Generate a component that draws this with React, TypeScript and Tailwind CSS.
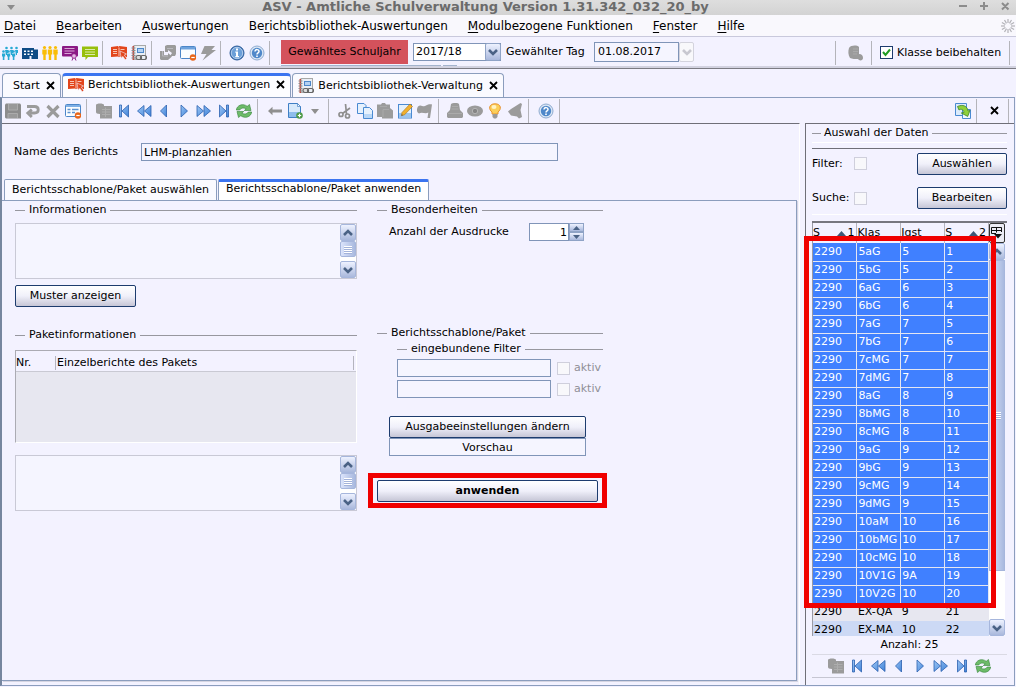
import React from "react";

type IconName =
  | "people" | "school" | "staff" | "board" | "chat" | "book" | "binder" | "export" | "form" | "bolt"
  | "info" | "help" | "db" | "save" | "undo" | "delete" | "formEdit" | "records" | "first" | "rewind"
  | "prev" | "next" | "forward" | "last" | "refresh" | "back" | "newDoc" | "caret" | "cut" | "copy"
  | "paste" | "edit" | "flag" | "print" | "eye" | "bulb" | "bell" | "swap" | "columns";

const GRAY = "#9b9b9b";
const BLUE = "#3f82d8";
const BLUE_EDGE = "#2a5fae";

const playRight = { fill: "url(#nav)", stroke: BLUE_EDGE, strokeWidth: 0.8 };

const drawings: Record<IconName, React.ReactNode> = {
  people: (
    <g fill="#27a9d4">
      {[4.5, 9.5, 14.5].map((x) => (
        <g key={x}>
          <circle cx={x} cy="3" r="1.3" />
          <path d={`M${x - 1.5} 5h3v3h-1v2h-1z`} />
          <circle cx={x - 3} cy="6.500" r="1.300" />
          <path d={`M${x - 4.5} 8.500h3.200v3h-.8v3.500h-1.600v-3.500h-.8z`} />
        </g>
      ))}
    </g>
  ),
  school: (
    <g>
      <path fill="#0f4c86" d="M0 3h12v1.500h4V14H9.500v-3h-2v3H0z" />
      <path fill="#fff" d="M2 5.500h2v1.500H2zM5.500 5.500h2v1.500h-2zM9 5.500h2v1.500H9zM2 8.500h2V10H2zM5.500 8.500h2V10h-2zM9 8.500h2V10H9z" />
    </g>
  ),
  staff: (
    <g fill="#f9bd07">
      {[2.5, 8, 13.5].map((x) => (
        <g key={x}>
          <circle cx={x} cy="2.500" r="1.600" />
          <path d={`M${x - 2.2} 4.500h4.400v5h-1v5.500h-2.400v-5.500h-1z`} />
        </g>
      ))}
    </g>
  ),
  board: (
    <g>
      <rect y="1" width="16" height="10.500" rx="1" fill="#8b1a85" />
      <path stroke="#d8a6d6" d="M2.500 3.500h10M2.500 6h10M2.500 8.500h7" />
      <circle cx="12" cy="11" r="2.300" fill="#e6b8e4" stroke="#8b1a85" strokeWidth=".8" />
      <path stroke="#8b1a85" d="M11 13l-1 2.500M13 13l1 2.500" />
    </g>
  ),
  chat: (
    <g>
      <path fill="#97bf0d" d="M0 1.500h16V12H6L3.500 15v-3H0z" />
      <path stroke="#dcebad" d="M3 4.500h10M3 7h10M3 9.500h10" />
    </g>
  ),
  book: (
    <g>
      <path fill="#e2451c" d="M0 2l7-1 .7 1 .6-1L16 2v10l-7-.5-1 .8-1-.8-7 .5z" />
      <path stroke="#f8c5b4" fill="none" d="M2 4.500h4M2 6.500h4M2 8.500h4M9.500 4.500h4M8 2.500v9" />
      <path fill="#e2451c" stroke="#f3f2ff" strokeWidth=".6" d="M9 6l6.500 3-2.200 1 2.500 3.500-1.600 1.300-2.400-3.500-1.600 2z" />
    </g>
  ),
  binder: (
    <g>
      <rect x="3" y=".5" width="11.500" height="14" fill="#e9eef5" stroke="#a8a8a8" />
      <path fill="#c3463c" d="M1.500 1H3v14H1.500z" />
      <path stroke="#8e8e8e" d="M.5 3h4M.5 5.500h4M.5 8h4M.5 10.500h4M.5 13h4" />
      <rect x="6.500" y="3.500" width="6" height="4" fill="#b4d1f2" stroke="#4d87c9" />
      <rect x="5" y="10.500" width="5.500" height="4" rx="2" fill="#ddd" stroke="#666" strokeWidth="1.200" />
      <rect x="9.500" y="10.500" width="6" height="4" rx="2" fill="none" stroke="#666" strokeWidth="1.200" />
    </g>
  ),
  export: (
    <g fill={GRAY}>
      <path d="M5 1l2-1h8l1 1v8l-1 2h-5l2-3-4-3v2H5z" />
      <path d="M0 6h4v4h4V8l4 3.500L8 15H1l-1-1z" />
      <path fill="none" stroke="#b9b9bf" d="M2.500 6v5h5.500M7 3.500h6" />
    </g>
  ),
  form: (
    <g>
      <rect x=".5" y="1.500" width="15" height="12" rx="1" fill="#fbfdff" stroke="#4c86c8" />
      <path fill="#6ea2dd" d="M1 2h14v2.500H1z" />
      <circle cx="13" cy="12.500" r="3.200" fill="#e8651a" />
      <path stroke="#fff" strokeWidth="1.200" d="M11.300 12.500h3.400" />
    </g>
  ),
  bolt: <path fill={GRAY} d="M4.500 1H15l-3.500 4H16L2.500 15.500 6.500 9H1z" />,
  info: (
    <g>
      <circle cx="8" cy="8" r="7" fill="#4a7fbf" stroke="#2f5f9c" />
      <circle cx="8" cy="8" r="5.700" fill="#6b9fd8" stroke="#c9dcf2" strokeWidth=".8" />
      <path fill="#fff" d="M7 3.500h2v2H7zM6.300 6.500H9v4.500h1v1.200H6.300V11H7V7.700h-.7z" />
    </g>
  ),
  help: (
    <g>
      <circle cx="8" cy="8" r="7" fill="#dbe7f5" stroke="#8fabd0" />
      <circle cx="8" cy="8" r="5.200" fill="#4f88ca" />
      <path fill="none" stroke="#fff" strokeWidth="1.500" d="M6 6.500c0-2.600 4-2.400 4 0C10 8 8 7.900 8 9.600" />
      <path fill="#fff" d="M7.200 10.500h1.600V12H7.200z" />
    </g>
  ),
  db: (
    <g fill={GRAY}>
      <path d="M1 3c2-3 8-3 10-1v7c3 0 4 2 4 4 0 3-4 3-5 1-3 0-6 0-8-1-2-3-2-7-1-10z" />
      <path stroke="#aaaaaa" fill="none" d="M5 4h5M5 6.500h5M5 9h4" />
    </g>
  ),
  save: (
    <g>
      <path fill="#8c8c8c" d="M0 1.500L1 .5h14l1 1v14H1L0 14.500z" />
      <path stroke="#ababab" d="M3.500 1v6h9V1M3 15V10.500h9.500V15" fill="#999" />
    </g>
  ),
  undo: <path fill="none" stroke={GRAY} strokeWidth="2.800" d="M2 3.500h7.500c5 0 5 6.500 0 6.500H5M6.800 6.500L2.800 10l4 4" />,
  delete: <path fill="none" stroke={GRAY} strokeWidth="3.200" d="M2.500 3l11 11M13.500 3l-11 11" />,
  formEdit: (
    <g>
      <rect x=".5" y="1.500" width="15" height="12" rx="1" fill="#fbfdff" stroke="#4c86c8" />
      <path fill="#7fb0e6" d="M1 2h14v2H1z" />
      <path stroke="#5d92cf" d="M2.500 6.500h3M7 6.500h6.500M2.500 9.500h3M7 9.500h3" strokeWidth="1.400" />
      <circle cx="13" cy="12.500" r="3.200" fill="#e8651a" />
      <path stroke="#fff" strokeWidth="1.200" d="M11.300 12.500h3.400" />
    </g>
  ),
  records: (
    <g>
      <path fill={GRAY} d="M0 2c0-2 8-2 8 0v1h8v12.500H4V11c-3 0-4-1-4-2z" />
      <path stroke="#adadad" fill="none" d="M6 6.500h8.500M6 9h8.500M6 11.500h8.500M9.500 4.500v9.500" />
    </g>
  ),
  first: (
    <g {...playRight}>
      <path d="M3.500 2h2v12h-2zM12.500 2v12L6 8z" />
    </g>
  ),
  rewind: <path {...playRight} d="M8 2.500v11L1.500 8zM15 2.500v11L8.500 8z" />,
  prev: <path {...playRight} d="M10.500 2v12L4.500 8z" />,
  next: <path {...playRight} d="M5 2v12l6.500-6z" />,
  forward: <path {...playRight} d="M1 2.500v11L7.500 8zM8 2.500v11L14.500 8z" />,
  last: (
    <g {...playRight}>
      <path d="M3.500 2v12L10 8zM10.500 2h2v12h-2z" />
    </g>
  ),
  refresh: (
    <g fill="#6dbb69" stroke="#35843a" strokeWidth=".6">
      <path d="M.3 7C1 2 7 0 11.200 3.300L13.500 1.500 15 7.500H8.300l1.900-1.700C7.500 4.300 4.500 5 3.800 7z" />
      <path d="M15.700 9c-.7 5-6.700 7-10.900 3.700L2.500 14.500 1 8.500h6.700l-1.900 1.700c2.700 1.500 5.700.8 6.400-1.200z" />
    </g>
  ),
  back: <path fill="#8f8f8f" d="M5.500 3.800v2.700H15v3H5.500v2.700L1 8z" />,
  newDoc: (
    <g>
      <path fill="#d7e9fb" stroke="#3f7fc5" d="M1.500.5h9l3 3v11h-12z" />
      <path fill="#8fbdec" d="M2 9h11v5H2z" />
      <path fill="#fff" stroke="#3f7fc5" strokeWidth=".7" d="M10.500.5v3h3z" />
      <circle cx="12.500" cy="12.500" r="3.300" fill="#4f9a48" />
      <path stroke="#fff" strokeWidth="1.200" d="M10.800 12.500h3.400M12.500 10.800v3.400" />
    </g>
  ),
  caret: <path fill="#8f8f8f" d="M4 6h8l-4 5z" />,
  cut: (
    <g fill="none" stroke="#8f8f8f" strokeWidth="1.700">
      <circle cx="4" cy="11.500" r="2" />
      <circle cx="10.500" cy="13" r="2" />
      <path d="M5.500 10.500L13 5M9.500 11L8.500 1" />
    </g>
  ),
  copy: (
    <g fill="#e6f1fd" stroke="#4a8ad2">
      <path d="M.5.5H7l2 2v8H.5z" />
      <path d="M6.500 4.500h6l3 3v8h-9z" />
      <path fill="#b9d7f7" stroke="none" d="M7 11h8v4H7z" />
    </g>
  ),
  paste: (
    <g>
      <path fill={GRAY} d="M0 1.500h4L5 0h3l1 1.500h4V5l3 2.500v8H5V14H0z" />
      <path stroke="#a9a9a9" fill="none" d="M3 3.500h7M6 14V6.500h6" />
    </g>
  ),
  edit: (
    <g>
      <rect x="1.500" y="1.500" width="13" height="13.500" fill="#e4f0fc" stroke="#4a8ad2" />
      <path fill="#9cc5ef" d="M2 10h12v4.500H2z" />
      <path fill="#f1b02e" stroke="#a9701a" strokeWidth=".6" d="M5 9.500L13 1l2.500 2.500-8 8.300-3 .9z" />
      <path fill="#555" d="M4.300 12.700l.5-1.600 1.200 1.200z" />
    </g>
  ),
  flag: <path fill={GRAY} d="M1 3.500c3-3 5 1.500 8-1 2-1.500 5-1.500 6-1L13 15h-2.500l.8-5.500c-3 2-6-1-9.300 1C0 10-1 7 1 3.500z" />,
  print: (
    <g>
      <path fill={GRAY} d="M4 1c3-1.500 6-1.500 8 0l1 6 3 3v4l-1 1H1l-1-1v-4l3-3z" />
      <path stroke="#ababab" fill="none" d="M5 3.500h6M4.500 6h7M1 10.500h14" />
    </g>
  ),
  eye: (
    <g>
      <ellipse cx="8" cy="8" rx="8" ry="5.500" fill={GRAY} />
      <circle cx="8" cy="8" r="2.700" fill="#858585" stroke="#b5b5b5" />
    </g>
  ),
  bulb: (
    <g>
      <path fill="#fbcf5a" stroke="#e8912d" d="M8 .8c6.500 0 6.500 5.700 3 8.200v2H5V9C1.500 6.500 1.500.8 8 .8z" />
      <ellipse cx="7" cy="4" rx="2.500" ry="2" fill="#fff3c4" />
      <path fill="#9a9a9a" d="M5.500 11h5v3L9 15.500H7L5.500 14z" />
    </g>
  ),
  bell: <path fill={GRAY} d="M13.500 0L15 1l-1.500 6L15 14l-3 1.500-2-2-6-1L1 8.500 4 6z" />,
  swap: (
    <g>
      <path fill="#dcebfb" stroke="#4a8ad2" d="M.5.5h11v12H.5z" />
      <path fill="#eef6ff" stroke="#4a8ad2" d="M7.500 6.500h8v9h-8z" />
      <path fill="#8fd03c" stroke="#3c8426" strokeWidth=".8" d="M2.500 3.500c5-2.500 10-.5 10.500 4.500l2-.6-2.300 6L6.300 10l2.700-.5C8.500 6.500 6 5.500 4 7z" />
    </g>
  ),
  columns: (
    <g fill="none" stroke="#111">
      <path d="M2.500 2.500h10v4.500M2.500 2.500v6H7M2.500 5.500h10M7.500 2.500v5" />
      <path fill="#111" stroke="none" d="M5 9h8l-4 4.500z" />
    </g>
  ),
};

function Icon({ name }: { name: IconName }) {
  return (
    <svg viewBox="0 0 16 16" className="h-4 w-4 shrink-0" aria-hidden="true">
      <defs>
        <linearGradient id="nav" x1="0" y1="0" x2="1" y2="1">
          <stop offset="0" stopColor="#9cc6f5" />
          <stop offset="1" stopColor={BLUE} />
        </linearGradient>
      </defs>
      {drawings[name]}
    </svg>
  );
}

function Tools({ items, className = "" }: { items: { name: IconName; label: string }[]; className?: string }) {
  return (
    <div className={`flex items-center ${className}`}>
      {items.map((item) => (
        <button key={item.label} type="button" aria-label={item.label} className="flex h-5 w-5 items-center justify-center">
          <Icon name={item.name} />
        </button>
      ))}
    </div>
  );
}

function Separator() {
  return <div className="h-6 w-px shrink-0 bg-[#b4b4ba]" />;
}

function Chevron({ up = false, color = "#4a6285" }: { up?: boolean; color?: string }) {
  return (
    <svg viewBox="0 0 10 8" className="h-2 w-[10px]" aria-hidden="true">
      <path fill="none" stroke={color} strokeWidth="2.600" d={up ? "M1 6l4-4 4 4" : "M1 2l4 4 4-4"} />
    </svg>
  );
}

const bevel = "border border-[#8fa3c6] bg-linear-to-b from-[#eef2ff] to-[#a9b8dc]";

function ScrollButton({ up = false }: { up?: boolean }) {
  return (
    <button
      type="button"
      aria-label={up ? "Nach oben" : "Nach unten"}
      className="flex h-[17px] w-full shrink-0 items-center justify-center rounded-xs border border-[#a6b6dc] bg-linear-to-b from-[#eef2ff] to-[#a9b8dc]"
    >
      <Chevron up={up} />
    </button>
  );
}

function Grip() {
  return (
    <div className="flex flex-col gap-px">
      {[0, 1, 2, 3].map((i) => (
        <div key={i} className="h-px w-2 bg-white shadow-[0_1px_0_#a3b3da]" />
      ))}
    </div>
  );
}

function MemoBox({ label }: { label: string }) {
  return (
    <div className="flex h-14 border border-[#c9c9d6] bg-[#f5f5ff]">
      <textarea aria-label={label} className="min-w-0 flex-1 resize-none bg-transparent outline-none" />
      <div className="flex w-4 flex-col bg-white">
        <ScrollButton up />
        <div className="flex h-4 items-center justify-center rounded-xs border border-[#a6b6dc] bg-linear-to-r from-[#dbe4fb] to-[#a9b9df]">
          <Grip />
        </div>
        <div className="flex-1" />
        <ScrollButton />
      </div>
    </div>
  );
}

function Legend({ children }: { children: React.ReactNode }) {
  return (
    <div className="flex h-4 items-center gap-1">
      <div className="h-px w-[10px] bg-[#97979f]" />
      <h2>{children}</h2>
      <div className="h-px flex-1 bg-[#97979f]" />
    </div>
  );
}

function Button({ children, className = "" }: { children: React.ReactNode; className?: string }) {
  return (
    <button
      type="button"
      className={`h-[22px] rounded-xs border border-[#1d3c6e] bg-linear-to-b from-white via-[#f0f0fa] to-[#c6c6d6] ${className}`}
    >
      {children}
    </button>
  );
}

const softCheck = "h-[13px] w-[13px] shrink-0 appearance-none border border-[#cfcfdc] bg-[#f8f8fb]";

function CloseMark() {
  return (
    <svg viewBox="0 0 9 9" className="h-[9px] w-[9px]" aria-hidden="true">
      <path stroke="#000" strokeWidth="1.800" d="M1 1l7 7M8 1L1 8" />
    </svg>
  );
}

function Tab({ children, active = false, icon }: { children: React.ReactNode; active?: boolean; icon?: IconName }) {
  return (
    <div
      className={
        active
          ? "flex h-6 items-center rounded-t-sm border border-b-0 border-t-3 border-[#8b9dbd] border-t-[#3b74f0] bg-[#fdfdff] px-[5px] pb-1"
          : "flex h-6 items-center rounded-t-sm border border-b-0 border-[#8b9dbd] bg-[#fafaff] px-[5px]"
      }
    >
      <button type="button" role="tab" aria-selected={active} className="flex items-center gap-1">
        {icon ? <Icon name={icon} /> : <span className="w-px" />}
        {children}
      </button>
      <button type="button" aria-label="Schließen" className="pl-1.5">
        <CloseMark />
      </button>
    </div>
  );
}

const menus: [string, string, string][] = [
  ["", "D", "atei"],
  ["", "B", "earbeiten"],
  ["", "A", "uswertungen"],
  ["Be", "r", "ichtsbibliothek-Auswertungen"],
  ["", "M", "odulbezogene Funktionen"],
  ["", "F", "enster"],
  ["", "H", "ilfe"],
];

const navTools: { name: IconName; label: string }[] = [
  { name: "records", label: "Datensätze" },
  { name: "first", label: "Erster" },
  { name: "rewind", label: "Schnell zurück" },
  { name: "prev", label: "Vorheriger" },
  { name: "next", label: "Nächster" },
  { name: "forward", label: "Schnell vor" },
  { name: "last", label: "Letzter" },
  { name: "refresh", label: "Aktualisieren" },
];

const classes: [string, string][] = [
  ["5aG", "5"], ["5bG", "5"], ["6aG", "6"], ["6bG", "6"], ["7aG", "7"], ["7bG", "7"], ["7cMG", "7"], ["7dMG", "7"],
  ["8aG", "8"], ["8bMG", "8"], ["8cMG", "8"], ["9aG", "9"], ["9bG", "9"], ["9cMG", "9"], ["9dMG", "9"],
  ["10aM", "10"], ["10bMG", "10"], ["10cMG", "10"], ["10V1G", "9A"], ["10V2G", "10"], ["EX-QA", "9"], ["EX-MA", "10"],
];

const SELECTED = 20;

function SortHeader({ order }: { order: number }) {
  return (
    <div className="flex items-center justify-between pr-0.5">
      <span>S</span>
      <span className="flex items-center gap-px">
        <svg viewBox="0 0 9 5" className="h-[5px] w-[9px]" aria-hidden="true">
          <path fill="#3d5878" d="M4.500 0L9 5H0z" />
        </svg>
        {order}
      </span>
    </div>
  );
}

function TitleBar() {
  return (
    <header className="flex h-[15px] shrink-0 items-center bg-linear-to-b from-[#dedede] to-[#d3d3d3] text-[#6b6b6b]">
      <svg viewBox="0 0 8 5" className="ml-[7px] h-[5px] w-2" aria-hidden="true">
        <path fill="#8c8c8c" d="M0 0h8L4 5z" />
      </svg>
      <h1 className="flex-1 pb-0.5 text-center text-[13px] leading-[13px] font-bold">
        ASV - Amtliche Schulverwaltung Version 1.31.342_032_20_by
      </h1>
      <svg viewBox="0 0 54 10" className="mr-1.5 mb-1 h-[10px] w-[54px]" aria-hidden="true">
        <path fill="none" stroke="#8c8c8c" strokeWidth="2" d="M3 5h8M24 5h8M28 1v8M46 2l6.500 6.500M52.500 2L46 8.500" />
      </svg>
    </header>
  );
}

function MenuBar() {
  return (
    <nav className="flex h-[22px] shrink-0 items-center justify-between border-b border-[#c9c9dc] bg-[#f9f8fd] pl-1 text-[12px]">
      <div className="flex gap-5">
        {menus.map(([before, key, after]) => (
          <button key={after} type="button">
            {before}
            <span className="underline underline-offset-2">{key}</span>
            {after}
          </button>
        ))}
      </div>
      <svg viewBox="0 0 16 16" className="h-4 w-4" aria-hidden="true">
        <g stroke="#b3b3b8" strokeWidth="1.200">
          {[0, 30, 60, 90, 120, 150, 180, 210, 240, 270, 300, 330].map((a) => (
            <path key={a} d="M8 1v4" transform={`rotate(${a} 8 8)`} />
          ))}
        </g>
      </svg>
    </nav>
  );
}

function MainToolbar() {
  return (
    <div className="flex h-8 shrink-0 items-center border-b border-[#7b7b83] bg-[#f3f2ff] shadow-[inset_0_-2px_0_#d2d2e0]">
      <Tools
        items={[
          { name: "people", label: "Schüler" },
          { name: "school", label: "Schulen" },
          { name: "staff", label: "Personal" },
          { name: "board", label: "Klassen" },
          { name: "chat", label: "Unterricht" },
        ]}
      />
      <div className="w-0.5" />
      <Separator />
      <div className="w-1.5" />
      <Tools items={[{ name: "book", label: "Berichte" }, { name: "binder", label: "Verwaltung" }]} />
      <div className="w-0.5" />
      <Separator />
      <div className="w-1.5" />
      <Tools items={[{ name: "export", label: "Export" }, { name: "form", label: "Maske" }, { name: "bolt", label: "Aktion" }]} />
      <div className="w-0.5" />
      <Separator />
      <div className="w-1.5" />
      <Tools items={[{ name: "info", label: "Info" }, { name: "help", label: "Hilfe" }]} />
      <div className="w-0.5" />
      <Separator />
      <div className="relative ml-[11px] flex items-center pb-0.5">
        <label htmlFor="year" className="flex h-6 w-[127px] items-center justify-center bg-[#d4525c] whitespace-nowrap">
          Gewähltes Schuljahr
        </label>
        <div className="relative ml-[5px]">
          <select id="year" className="h-[18px] w-[88px] appearance-none border border-[#8095b8] bg-white pl-0.5 leading-4">
            <option>2017/18</option>
          </select>
          <div className={`pointer-events-none absolute top-0 right-0 flex h-[18px] w-4 items-center justify-center rounded-xs ${bevel}`}>
            <Chevron />
          </div>
        </div>
        <label htmlFor="day" className="ml-[5px] w-[83px] whitespace-nowrap">Gewählter Tag</label>
        <input id="day" defaultValue="01.08.2017" className="ml-[5px] h-5 w-[85px] border border-[#8095b8] bg-[#f5f5ff] px-[3px]" />
        <button type="button" aria-label="Kalender" className="flex h-5 w-[15px] items-center justify-center rounded-xs border border-[#d3d3dd] bg-[#f8f8fb]">
          <Chevron color="#c8c8d0" />
        </button>
        <div className="absolute bottom-0 left-0 flex gap-0.5">
          <div className="h-px w-40 bg-[#a3b3cc]" />
          <div className="h-px w-[14px] bg-[#a3b3cc]" />
        </div>
      </div>
      <div className="ml-auto flex items-center">
        <Separator />
        <div className="w-[10px]" />
        <Tools items={[{ name: "db", label: "Datenbank" }]} />
        <div className="w-[5px]" />
        <Separator />
        <label className="ml-2 flex w-[129px] items-center gap-1 whitespace-nowrap">
          <span className="relative flex">
            <input type="checkbox" defaultChecked className="h-[13px] w-[13px] appearance-none border border-[#1d3c6e] bg-white" />
            <svg viewBox="0 0 13 13" className="pointer-events-none absolute inset-0" aria-hidden="true">
              <path fill="none" stroke="#1f9c24" strokeWidth="2" d="M3 6l2.500 3L10 3.500" />
            </svg>
          </span>
          Klasse beibehalten
        </label>
        <Separator />
        <div className="w-1.5" />
      </div>
    </div>
  );
}

function ModuleToolbar() {
  return (
    <div className="flex h-[25px] shrink-0 items-center bg-[#f3f2ff]">
      <div className="w-px" />
      <Tools
        items={[
          { name: "save", label: "Speichern" },
          { name: "undo", label: "Rückgängig" },
          { name: "delete", label: "Löschen" },
          { name: "formEdit", label: "Maske" },
        ]}
      />
      <div className="w-[3px]" />
      <Separator />
      <div className="w-[7px]" />
      <Tools items={navTools} />
      <div className="w-[3px]" />
      <Separator />
      <div className="w-[7px]" />
      <Tools items={[{ name: "back", label: "Zurück" }, { name: "newDoc", label: "Neu" }, { name: "caret", label: "Neu Auswahl" }]} />
      <div className="w-[3px]" />
      <Separator />
      <div className="w-1.5" />
      <Tools
        items={[
          { name: "cut", label: "Ausschneiden" },
          { name: "copy", label: "Kopieren" },
          { name: "paste", label: "Einfügen" },
          { name: "edit", label: "Ändern" },
          { name: "flag", label: "Markieren" },
        ]}
      />
      <div className="w-[3px]" />
      <Separator />
      <div className="w-1.5" />
      <Tools
        items={[
          { name: "print", label: "Drucken" },
          { name: "eye", label: "Vorschau" },
          { name: "bulb", label: "Hinweis" },
          { name: "bell", label: "Wiedervorlage" },
        ]}
      />
      <div className="w-[3px]" />
      <Separator />
      <div className="w-[7px]" />
      <Tools items={[{ name: "help", label: "Hilfe zum Modul" }]} />
      <div className="w-[3px]" />
      <Separator />
      <div className="ml-auto flex items-center">
        <Tools items={[{ name: "swap", label: "Ansicht wechseln" }]} />
        <div className="w-[3px]" />
        <Separator />
        <button type="button" aria-label="Modul schließen" className="flex w-[31px] justify-center pl-1">
          <CloseMark />
        </button>
        <Separator />
        <div className="w-[5px]" />
      </div>
    </div>
  );
}

function FilterRow({ n }: { n: number }) {
  return (
    <div className="flex h-[18px] items-center">
      <input aria-label={`Filter ${n}`} className="h-[18px] w-[154px] border border-[#8095b8] bg-[#f5f5ff] px-1" />
      <label className="ml-1.5 flex items-center gap-1 text-[#8f8f96]">
        <input type="checkbox" disabled className={softCheck} />
        aktiv
      </label>
    </div>
  );
}

function ReportForm() {
  return (
    <main className="flex min-w-0 flex-1 flex-col border-t border-r border-t-[#6f6f78] border-r-white pr-[2px]">
      <div className="mt-[19px] ml-3 flex items-center">
        <label htmlFor="report" className="w-[127px]">Name des Berichts</label>
        <input id="report" defaultValue="LHM-planzahlen" className="h-[18px] w-[417px] border border-[#8095b8] bg-[#f5f5ff] px-0.5" />
      </div>
      <div role="tablist" className="mt-[18px] ml-0.5 flex items-end gap-px">
        <button type="button" role="tab" aria-selected={false} className="h-[21px] rounded-t-xs border border-b-0 border-[#8b9dbd] bg-[#fafaff] px-[7px] whitespace-nowrap">
          Berichtsschablone/Paket auswählen
        </button>
        <button type="button" role="tab" aria-selected className="h-[21px] rounded-t-xs border border-t-3 border-b-0 border-[#8b9dbd] border-t-[#3b74f0] bg-white px-[7px] pb-1 whitespace-nowrap">
          Berichtsschablone/Paket anwenden
        </button>
      </div>
      <div className="mb-1 flex min-h-0 flex-1 gap-[11px] border border-l-0 border-[#8b9dbd] pt-px pl-[13px] shadow-[1px_1px_0_#d5d5e2]">
        <section className="flex w-[342px] flex-col">
          <Legend>Informationen</Legend>
          <div className="mt-[5px]"><MemoBox label="Informationen" /></div>
          <Button className="mt-1.5 w-[121px]">Muster anzeigen</Button>
          <div className="mt-5"><Legend>Paketinformationen</Legend></div>
          <div className="mt-[7px] h-[93px] border border-[#ababb3] border-r-white border-b-white bg-[#e7e7f0]">
            <table className="w-full table-fixed bg-[#f3f2ff] text-left">
              <thead>
                <tr className="h-5 border-b border-[#c9c9d3] align-bottom">
                  <th className="w-10 pb-px font-normal"><div className="border-r border-[#b4b4be]">Nr.</div></th>
                  <th className="pb-px font-normal"><div className="mr-0.5 border-r border-[#b4b4be] pl-px">Einzelberichte des Pakets</div></th>
                </tr>
              </thead>
            </table>
          </div>
          <div className="mt-3"><MemoBox label="Paketbeschreibung" /></div>
        </section>
        <section className="flex w-[239px] flex-col">
          <div className="mr-1 ml-[9px]"><Legend>Besonderheiten</Legend></div>
          <div className="mt-[5px] ml-[21px] flex h-[18px] items-center">
            <label htmlFor="copies" className="w-[140px]">Anzahl der Ausdrucke</label>
            <input id="copies" inputMode="numeric" defaultValue="1" className="h-[18px] w-10 border border-[#8095b8] bg-white px-px text-right" />
            <div className="flex w-[15px] flex-col">
              <button type="button" aria-label="Mehr" className={`flex h-[9px] items-center justify-center ${bevel}`}>
                <svg viewBox="0 0 7 4" className="h-1 w-[7px]" aria-hidden="true"><path fill="#4a6285" d="M3.500 0L7 4H0z" /></svg>
              </button>
              <button type="button" aria-label="Weniger" className={`flex h-[9px] items-center justify-center ${bevel}`}>
                <svg viewBox="0 0 7 4" className="h-1 w-[7px]" aria-hidden="true"><path fill="#4a6285" d="M0 0h7L3.500 4z" /></svg>
              </button>
            </div>
          </div>
          <div className="mt-[84px] mr-1 ml-[9px]"><Legend>Berichtsschablone/Paket</Legend></div>
          <div className="mr-1 ml-[29px]">
            <Legend>eingebundene Filter</Legend>
            <div className="mt-[2px] flex flex-col gap-[3px]">
              <FilterRow n={1} />
              <FilterRow n={2} />
            </div>
          </div>
          <div className="mt-[18px] mr-[21px] ml-[21px] flex flex-col">
            <Button>Ausgabeeinstellungen ändern</Button>
            <input aria-label="Ausgabeart" readOnly defaultValue="Vorschau" className="h-[18px] w-full border border-[#8095b8] bg-[#f5f5ff] text-center" />
          </div>
          <div className="mt-[17px] border-5 border-[#f00000] px-1 pt-0.5 pb-px">
            <Button className="w-[221px] font-bold">anwenden</Button>
          </div>
        </section>
      </div>
    </main>
  );
}

const headCell = "overflow-hidden border-r border-[#b4b4be] p-0 text-left font-normal";

function ClassTable() {
  return (
    <div className="relative mt-1.5 flex min-h-0 flex-1 border-t-2 border-[#77777f]">
      <div className="w-[177px] overflow-hidden border-l border-[#9a9aa4]">
        <table className="w-[176px] table-fixed border-collapse">
          <thead>
            <tr className="h-5">
              <th className={headCell}><SortHeader order={1} /></th>
              <th className={headCell}>Klas</th>
              <th className={headCell}>Jgst</th>
              <th className={headCell}><SortHeader order={2} /></th>
            </tr>
          </thead>
          <tbody>
            {classes.map(([name, grade], i) => (
              <tr
                key={name}
                className={
                  i < SELECTED ? "h-[18px] bg-[#4080ff] text-white" : i % 2 ? "h-[18px] bg-[#ccd9f5]" : "h-[18px] bg-[#e7e7f0]"
                }
              >
                {["2290", name, grade, String(i + 1)].map((value, c) => (
                  <td key={c} className={i < SELECTED ? "border-r border-b border-[#e4e6f2] p-0 pl-px whitespace-nowrap" : "p-0 pl-px whitespace-nowrap"}>
                    {value}
                  </td>
                ))}
              </tr>
            ))}
          </tbody>
        </table>
      </div>
      <div className="flex w-4 flex-col bg-white">
        <button type="button" aria-label="Spalten" className="flex h-5 shrink-0 items-center justify-center rounded-xs border border-[#333] bg-[#ececf4]">
          <Icon name="columns" />
        </button>
        <ScrollButton up />
        <div className="flex h-[311px] items-center justify-center border border-[#a6b6dc] bg-linear-to-r from-[#dbe4fb] to-[#a9b9df]">
          <Grip />
        </div>
        <div className="flex-1" />
        <ScrollButton />
      </div>
      <div className="pointer-events-none absolute top-[13px] -left-2 h-[372px] w-[192px] border-5 border-[#f00000]" />
    </div>
  );
}

function SelectionPanel() {
  return (
    <aside className="ml-[5px] flex w-[209px] shrink-0 flex-col border-t border-l border-[#6f6f78] pr-[7px] pl-1.5">
      <div className="flex h-[19px] items-center gap-[3px] border-b border-white">
        <div className="h-px w-[9px] bg-[#97979f]" />
        <h2>Auswahl der Daten</h2>
        <div className="h-px flex-1 bg-[#97979f]" />
      </div>
      <div className="mt-[5px] flex h-[27px] items-end border-t border-[#6f6f78]">
        <label className="flex h-[23px] flex-1 items-center">
          <span className="w-[42px]">Filter:</span>
          <input type="checkbox" className={softCheck} />
        </label>
        <Button className="w-[90px]">Auswählen</Button>
      </div>
      <div className="mt-3 flex h-[22px] items-center">
        <label className="flex flex-1 items-center">
          <span className="w-[42px]">Suche:</span>
          <input type="checkbox" className={softCheck} />
        </label>
        <Button className="w-[90px]">Bearbeiten</Button>
      </div>
      <div className="mt-[5px] h-px bg-white" />
      <ClassTable />
      <div className="flex h-[19px] items-center justify-center border-b border-[#dadae4]">Anzahl: 25</div>
      <div className="flex h-[23px] items-center justify-center border-b border-[#c6c6d2]">
        <Tools items={navTools} className="gap-px" />
      </div>
      <div className="h-[7px]" />
    </aside>
  );
}

export default function App() {
  return (
    <div className="flex h-screen flex-col overflow-hidden bg-[#f3f2ff] font-['DejaVu_Sans',sans-serif] text-[11px] leading-[14px] text-black">
      <TitleBar />
      <MenuBar />
      <MainToolbar />
      <div role="tablist" className="flex h-7 shrink-0 items-end gap-px pl-0.5 whitespace-nowrap">
        <Tab>Start</Tab>
        <Tab active icon="book">Berichtsbibliothek-Auswertungen</Tab>
        <Tab icon="binder">Berichtsbibliothek-Verwaltung</Tab>
      </div>
      <div className="mr-px mb-px flex min-h-0 flex-1 flex-col border border-[#8b9dbd] border-l-2 border-l-[#76869f]">
        <ModuleToolbar />
        <div className="flex min-h-0 flex-1">
          <ReportForm />
          <SelectionPanel />
        </div>
      </div>
    </div>
  );
}
